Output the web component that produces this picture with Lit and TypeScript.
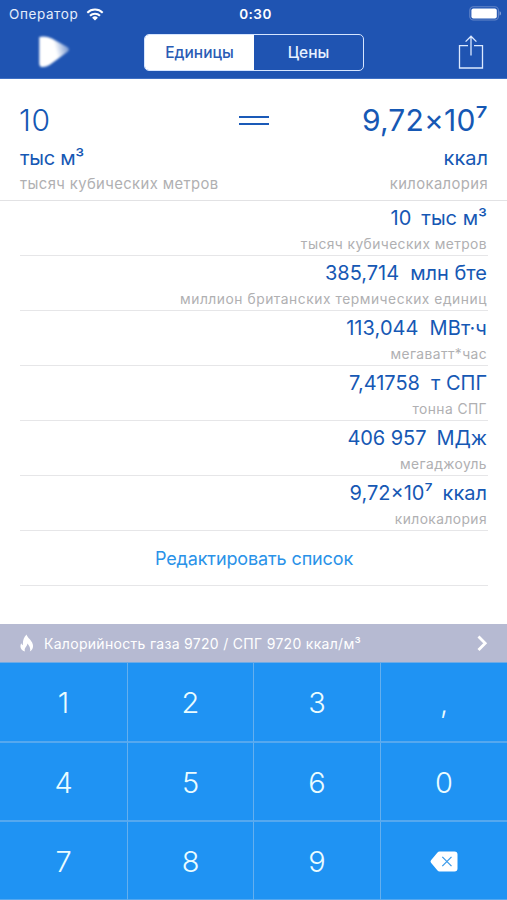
import { LitElement, html, css, svg } from "lit";
import { customElement, state } from "lit/decorators.js";
import { classMap } from "lit/directives/class-map.js";

interface Unit {
  value: string;
  unit: string;
  name: string;
  cls: string;
}

const UNITS: Unit[] = [
  { value: "10", unit: "тыс м³", name: "тысяч кубических метров", cls: "u1" },
  { value: "385,714", unit: "млн бте", name: "миллион британских термических единиц", cls: "u2" },
  { value: "113,044", unit: "МВт·ч", name: "мегаватт*час", cls: "u3" },
  { value: "7,41758", unit: "т СПГ", name: "тонна СПГ", cls: "u4" },
  { value: "406 957", unit: "МДж", name: "мегаджоуль", cls: "u5" },
  { value: "9,72×10⁷", unit: "ккал", name: "килокалория", cls: "u6" },
];

const KEYS = ["1", "2", "3", ",", "4", "5", "6", "0", "7", "8", "9", "del"];

const wifi = svg`<svg class="wifi" viewBox="0 0 18 13" width="18" height="13">
  <path d="M1.3 4.7a11 11 0 0 1 15.4 0" fill="none" stroke="#fff" stroke-width="2"/>
  <path d="M4 7.7a7.1 7.1 0 0 1 10 0" fill="none" stroke="#fff" stroke-width="2"/>
  <path d="M9 12.6 6.1 9.8a4.1 4.1 0 0 1 5.8 0z" fill="#fff"/>
</svg>`;

const battery = svg`<svg class="battery" viewBox="0 0 33 15" width="33" height="15">
  <rect x=".8" y=".8" width="28.6" height="13.2" rx="3.6" fill="none" stroke="#6485c8" stroke-width="1.1"/>
  <rect x="2.4" y="2.4" width="25.4" height="10" rx="2" fill="#fff"/>
  <path d="M30.6 5.2c1.7.6 1.7 3.8 0 4.4z" fill="#8fa9dc"/>
</svg>`;

const play = svg`<svg class="play" viewBox="0 0 44 44" width="44" height="44">
  <defs>
    <linearGradient id="fade" x1="0" x2="1" y1=".6" y2=".35">
      <stop offset="0" stop-color="#fff"/>
      <stop offset=".55" stop-color="#fff"/>
      <stop offset="1" stop-color="#fff" stop-opacity=".35"/>
    </linearGradient>
    <filter id="soft" x="-20%" y="-20%" width="140%" height="140%"><feGaussianBlur stdDeviation="1.2"/></filter>
  </defs>
  <path d="M7.300 8q6-1.500 12.500 1.500l15.500 8.500q3.500 2.500 0 5L17.500 36q-4 2.500-8 2-2.200-.5-2.200-4z" fill="url(#fade)" filter="url(#soft)"/>
</svg>`;

const share = svg`<svg class="share" viewBox="0 0 26 36" width="26" height="36">
  <path d="M10 11.600H1.500V34h23V11.600H16M13 21.500V2.500M7.600 7.600 13 2.200l5.400 5.400" fill="none" stroke="#dce9ff" stroke-width="1.300"/>
</svg>`;

const flame = svg`<svg class="flame" viewBox="0 0 14 18" width="14" height="18">
  <path d="M6.600.4C7 3 10.200 5 12 8.200c2 3.600 1 7.300-2.200 9.300 1.200-3-.2-4.900-2.400-7.900-.2 2.200-1.400 3-2.200 4.400-.7 1.200-.7 2.200-.2 3.500C.8 16.300-.6 12.700 1.200 9.300c.5.900.9 1.500 1.700 1.900C2.600 7 3.600 3 6.600.4z" fill="#fff"/>
</svg>`;

const chevron = svg`<svg class="chevron" viewBox="0 0 12 18" width="12" height="18">
  <path d="M2.500 2.500 9.200 9.300l-6.700 6.800" fill="none" stroke="#fff" stroke-width="2.800"/>
</svg>`;

const backspace = svg`<svg viewBox="0 0 28 21" width="28" height="21">
  <path d="M9.500.6h15a3 3 0 0 1 3 3v13.800a3 3 0 0 1-3 3h-15q-1.200 0-2-.9L1 11.700q-1-1.200 0-2.400l6.500-7.800q.8-.9 2-.9z" fill="#fff"/>
  <path d="M12.300 5.900l9.200 9.200m0-9.200-9.200 9.200" stroke="#3b9bea" stroke-width="1.300" fill="none"/>
</svg>`;

@customElement("app-root")
export class AppRoot extends LitElement {
  @state() private tab = 0;

  static styles = css`
    :host {
      display: flex;
      flex-direction: column;
      width: 507px;
      height: 900px;
      overflow: hidden;
      background: #fff;
      font-family: Inter, "Noto Sans", sans-serif;
      white-space: nowrap;
    }
    * { box-sizing: border-box; }
    svg { display: block; flex: none; }
    .header { height: 79px; background: #1f54b2; color: #fff; border-bottom: 1px solid #3f70c4; }
    .status { height: 28px; display: grid; grid-template-columns: 1fr auto 1fr; align-items: center; padding: 0 5px 0 9px; font-size: 13.5px; line-height: 28px; }
    .carrier { display: flex; align-items: center; gap: 8px; color: #e4edfb; letter-spacing: .6px; }
    .clock { font-weight: 600; letter-spacing: .5px; }
    .battery { justify-self: end; margin-top: -2px; }
    .nav { height: 50px; display: grid; grid-template-columns: 144px 220px 1fr; align-items: start; }
    .play { margin: 1px 0 0 32px; }
    .tabs { margin-top: 6px; height: 37px; display: flex; border: 1.500px solid #d5e5ff; border-radius: 5px; overflow: hidden; }
    .tab { flex: 1; text-align: center; font-size: 15.500px; line-height: 36px; font-weight: 450; color: #e8f1ff; }
    .tab.on { background: #fff; color: #2a5cb5; }
    .share { justify-self: end; margin: 6px 23px 0 0; }
    .top { height: 122px; padding: 23px 19px 0 20px; display: grid; grid-template-columns: 1fr 32px 1fr; border-bottom: 1.500px solid #e2e2e4; color: #1658b4; }
    .side { display: flex; flex-direction: column; }
    .side.right { align-items: flex-end; }
    .big { font-size: 30px; line-height: 37px; height: 36px; font-weight: 300; letter-spacing: .7px; }
    .side .big { margin-left: -1px; }
    .right .big { font-weight: 400; letter-spacing: .2px; }
    .unit { font-size: 20px; line-height: 39px; height: 38px; letter-spacing: -.3px; margin-top: 1px; }
    .right .unit { letter-spacing: 0; }
    .name { font-size: 14.800px; line-height: 17px; height: 16px; color: #b0b0b2; letter-spacing: .4px; margin-top: -1px; }
    .equals { display: flex; flex-direction: column; gap: 5px; padding-top: 14px; margin-left: 1px; }
    .bar { height: 2px; width: 30px; background: #1a5ab8; }
    .list { margin: 0 19px 0 20px; height: 423px; }
    .row { height: 55px; padding: 4px 1px 0 0; border-bottom: 1px solid #e6e6e8; display: flex; flex-direction: column; align-items: flex-end; }
    .value { display: flex; gap: 11px; font-size: 20px; line-height: 27px; height: 27px; color: #1658b4; }
    .u3 .value { letter-spacing: .08px; }
    .u1 .value, .u5 .value, .u6 .value { gap: 10px; }
    .u5 .value { letter-spacing: -.05px; }
    .caption { font-size: 13.800px; line-height: 24px; height: 24px; color: #b0b0b2; letter-spacing: .42px; }
    .u2 .caption { letter-spacing: .54px; }
    .edit { height: 55px; line-height: 56px; text-align: center; font-size: 18px; letter-spacing: -.12px; color: #2a92e8; border-bottom: 1px solid #e6e6e8; }
    .info { height: 38px; background: #b6bad2; color: #fff; display: flex; align-items: center; padding: 0 19px 0 20px; font-size: 14px; }
    .info-text { flex: 1; margin-left: 10px; line-height: 39px; letter-spacing: .3px; }
    .keys { height: 238px; display: grid; grid-template-columns: 128px 126px 127px 126px; grid-template-rows: 80px 79px 79px; background: #1f93f3; border-top: 1px solid #6fabe5; }
    .key { display: flex; align-items: center; justify-content: center; padding-top: 1px; color: #eafcff; font-size: 29px; font-weight: 300; border-right: 1.500px solid #64afee; border-bottom: 2px solid #55a8ef; }
    .key:nth-child(4n) { border-right: 0; }
  `;

  render() {
    return html`
      <div class="header">
        <div class="status">
          <div class="carrier"><span>Оператор</span>${wifi}</div>
          <div class="clock">0:30</div>
          ${battery}
        </div>
        <div class="nav">
          ${play}
          <div class="tabs">
            ${["Единицы", "Цены"].map((t, i) => html`<div class=${classMap({ tab: true, on: this.tab === i })} @click=${() => (this.tab = i)}>${t}</div>`)}
          </div>
          ${share}
        </div>
      </div>
      <div class="top">
        <div class="side"><div class="big">10</div><div class="unit">тыс м³</div><div class="name">тысяч кубических метров</div></div>
        <div class="equals"><div class="bar"></div><div class="bar"></div></div>
        <div class="side right"><div class="big">9,72×10⁷</div><div class="unit">ккал</div><div class="name">килокалория</div></div>
      </div>
      <div class="list">
        ${UNITS.map((u) => html`<div class="row ${u.cls}"><div class="value"><span>${u.value}</span><span>${u.unit}</span></div><div class="caption">${u.name}</div></div>`)}
        <div class="edit">Редактировать список</div>
      </div>
      <div class="info">${flame}<div class="info-text">Калорийность газа 9720 / СПГ 9720 ккал/м³</div>${chevron}</div>
      <div class="keys">${KEYS.map((k) => html`<div class="key">${k === "del" ? backspace : k}</div>`)}</div>
    `;
  }
}
